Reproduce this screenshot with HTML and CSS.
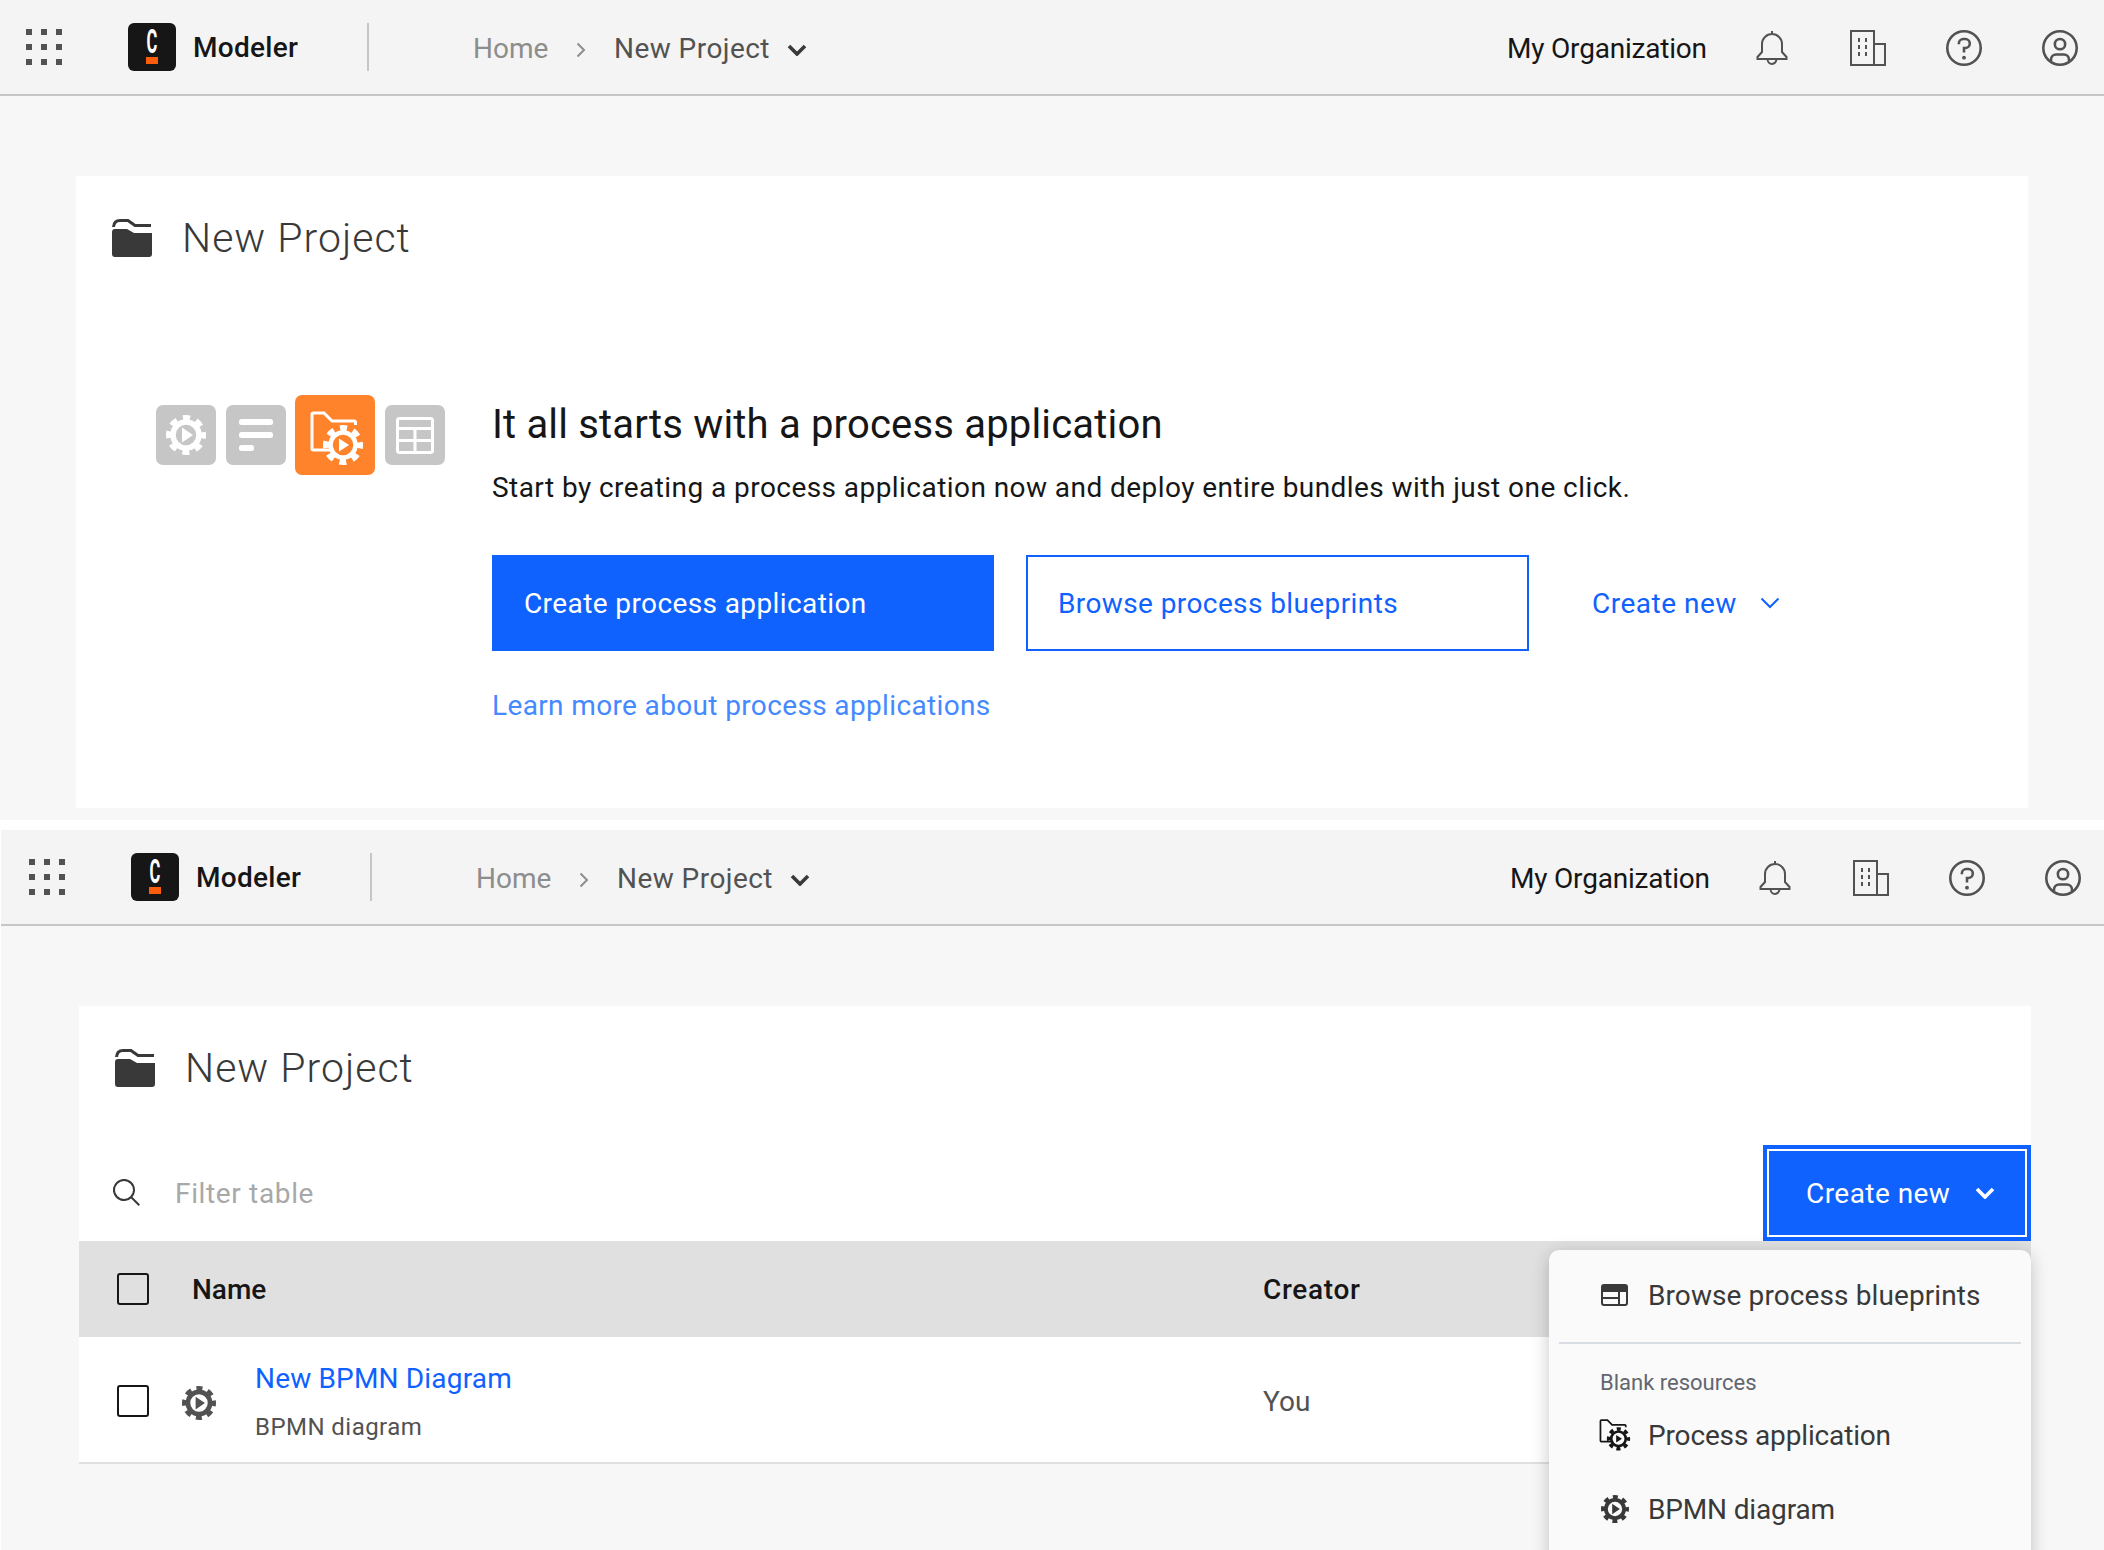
FILE: index.html
```html
<!DOCTYPE html>
<html lang="en">
<head>
  <meta charset="UTF-8" />
  <title>New Project - Modeler</title>
  <link rel="stylesheet" href="styles.css">
</head>
<body>
  <svg class="defs" width="0" height="0">
    <symbol id="i-grid" viewBox="0 0 36 36">
      <rect width="6" height="6" fill="currentColor"/><rect x="15" width="6" height="6" fill="currentColor"/><rect x="30" width="6" height="6" fill="currentColor"/>
      <rect y="15" width="6" height="6" fill="currentColor"/><rect x="15" y="15" width="6" height="6" fill="currentColor"/><rect x="30" y="15" width="6" height="6" fill="currentColor"/>
      <rect y="30" width="6" height="6" fill="currentColor"/><rect x="15" y="30" width="6" height="6" fill="currentColor"/><rect x="30" y="30" width="6" height="6" fill="currentColor"/>
    </symbol>
    <symbol id="i-bell" viewBox="0 0 32 36">
      <path d="M16 1v3M6 22V14a10 10 0 0 1 20 0v8l4.500 5v2H1.500v-2zM11.500 29a4.500 5 0 0 0 9 0" fill="none" stroke="currentColor" stroke-width="2"/>
    </symbol>
    <symbol id="i-building" viewBox="0 0 36 36">
      <path d="M1 35V1h23v34zM24 14h11v21H1" fill="none" stroke="currentColor" stroke-width="2"/>
      <path d="M9 8v4M9 15v4M9 22v4M16 8v4M16 15v4M16 22v4" fill="none" stroke="currentColor" stroke-width="2"/>
    </symbol>
    <symbol id="i-help" viewBox="2 2 28 28">
      <path fill="currentColor" d="M16,2A14,14,0,1,0,30,16,14,14,0,0,0,16,2Zm0,26A12,12,0,1,1,28,16,12,12,0,0,1,16,28Z"/>
      <circle fill="currentColor" cx="16" cy="23.500" r="1.500"/>
      <path fill="currentColor" d="M17,8H15.500A4.490,4.490,0,0,0,11,12.500V13h2v-.5A2.500,2.500,0,0,1,15.500,10H17a2.500,2.500,0,0,1,0,5H15v4.500h2V17a4.500,4.500,0,0,0,0-9Z"/>
    </symbol>
    <symbol id="i-user" viewBox="2 2 28 28">
      <path fill="currentColor" d="M16,8a5,5,0,1,0,5,5A5,5,0,0,0,16,8Zm0,8a3,3,0,1,1,3-3A3.003,3.003,0,0,1,16,16Z"/>
      <path fill="currentColor" d="M16,2A14,14,0,1,0,30,16,14.016,14.016,0,0,0,16,2ZM10,26.377V25a3.003,3.003,0,0,1,3-3h6a3.003,3.003,0,0,1,3,3v1.377a11.899,11.899,0,0,1-12,0Zm13.993-1.451A5.002,5.002,0,0,0,19,20H13a5.002,5.002,0,0,0-4.993,4.926,12,12,0,1,1,15.985,0Z"/>
    </symbol>
    <symbol id="i-search" viewBox="2 2 28 28">
      <path fill="currentColor" d="M29,27.586l-7.552-7.552a11.018,11.018,0,1,0-1.414,1.414L27.586,29ZM4,13a9,9,0,1,1,9,9A9.010,9.010,0,0,1,4,13Z"/>
    </symbol>
    <symbol id="i-folder" viewBox="0 0 40 38">
      <path d="M1.500 8Q2 1.500 8 1.500H16L23 6.500H39" fill="none" stroke="currentColor" stroke-width="3"/>
      <path d="M0 13Q0 10 3 10H15L22 14H40V35a3 3 0 0 1-3 3H3a3 3 0 0 1-3-3Z" fill="currentColor"/>
    </symbol>
    <symbol id="i-gear" viewBox="0 0 40 40">
      <circle cx="20" cy="20" r="13" fill="none" stroke="currentColor" stroke-width="5.500"/>
      <circle cx="20" cy="20" r="17" fill="none" stroke="currentColor" stroke-width="6" stroke-dasharray="7 6.350" stroke-dashoffset="3.500"/>
      <path d="M16 12.500 27 20 16 27.500z" fill="currentColor"/>
    </symbol>
    <symbol id="i-app" viewBox="0 0 54 55">
      <path d="M24 39H3.500A1.500 1.500 0 0 1 2 37.500V3.500A1.500 1.500 0 0 1 3.500 2H14l8 8H44a1.500 1.500 0 0 1 1.500 1.500V14" fill="none" stroke="currentColor" stroke-width="3"/>
      <circle cx="33" cy="34" r="12.500" fill="none" stroke="currentColor" stroke-width="4.500"/>
      <circle cx="33" cy="34" r="17" fill="none" stroke="currentColor" stroke-width="6" stroke-dasharray="7 6.350" stroke-dashoffset="3.500"/>
      <path d="M29 27.500 39 34 29 40.500z" fill="currentColor"/>
    </symbol>
    <symbol id="i-lines" viewBox="0 0 34 32">
      <rect y="0" width="34" height="6" rx="2.500" fill="currentColor"/>
      <rect y="13" width="34" height="6" rx="2.500" fill="currentColor"/>
      <rect y="26" width="15" height="6" rx="2.500" fill="currentColor"/>
    </symbol>
    <symbol id="i-table" viewBox="0 0 38 37">
      <rect x="1.500" y="1.500" width="35" height="34" rx="2" fill="none" stroke="currentColor" stroke-width="3"/>
      <path d="M1.500 11.500h35M1.500 23.500h35M19 11.500v24" fill="none" stroke="currentColor" stroke-width="3"/>
    </symbol>
    <symbol id="i-browse" viewBox="0 0 27 22">
      <rect x="1" y="1" width="25" height="20" rx="2" fill="none" stroke="currentColor" stroke-width="2"/>
      <rect x="1" y="1" width="25" height="7" fill="currentColor"/>
      <path d="M1 14h17M18 8v13" fill="none" stroke="currentColor" stroke-width="2"/>
    </symbol>
    <symbol id="i-chev" viewBox="0 0 20 12">
      <path d="M2 2 10 10 18 2" fill="none" stroke="currentColor" stroke-width="3.600"/>
    </symbol>
    <symbol id="i-chev-thin" viewBox="0 0 20 12">
      <path d="M1.500 1.500 10 10 18.500 1.500" fill="none" stroke="currentColor" stroke-width="2"/>
    </symbol>
    <symbol id="i-crumb" viewBox="0 0 10 16">
      <path d="M1.500 1.500 8 8 1.500 14.500" fill="none" stroke="currentColor" stroke-width="2"/>
    </symbol>
  </svg>

  <section class="panel">
    <header class="topbar">
      <svg class="grid-icon"><use href="#i-grid"/></svg>
      <div class="logo"><span class="logo-c">C</span><span class="logo-mark"></span></div>
      <span class="app-name">Modeler</span>
      <span class="topbar-sep"></span>
      <nav class="crumbs">
        <span class="crumb-home">Home</span>
        <svg class="crumb-sep"><use href="#i-crumb"/></svg>
        <span class="crumb-current">New Project</span>
        <svg class="crumb-chev"><use href="#i-chev"/></svg>
      </nav>
      <div class="topbar-right">
        <span class="org">My Organization</span>
        <svg class="top-icon bell"><use href="#i-bell"/></svg>
        <svg class="top-icon"><use href="#i-building"/></svg>
        <svg class="top-icon"><use href="#i-help"/></svg>
        <svg class="top-icon"><use href="#i-user"/></svg>
      </div>
    </header>

    <main class="card">
      <div class="card-title">
        <svg class="folder"><use href="#i-folder"/></svg>
        <h1>New Project</h1>
      </div>
      <div class="empty">
        <div class="tiles">
          <div class="tile"><svg class="tile-gear"><use href="#i-gear"/></svg></div>
          <div class="tile"><svg class="tile-lines"><use href="#i-lines"/></svg></div>
          <div class="tile tile-active"><svg class="tile-app"><use href="#i-app"/></svg></div>
          <div class="tile"><svg class="tile-table"><use href="#i-table"/></svg></div>
        </div>
        <div class="empty-text">
          <h2>It all starts with a process application</h2>
          <p class="desc">Start by creating a process application now and deploy entire bundles with just one click.</p>
          <div class="actions">
            <button class="btn btn-primary">Create process application</button>
            <button class="btn btn-outline">Browse process blueprints</button>
            <button class="btn-ghost">Create new <svg class="ghost-chev"><use href="#i-chev-thin"/></svg></button>
          </div>
          <a class="learn">Learn more about process applications</a>
        </div>
      </div>
    </main>
  </section>

  <section class="panel panel-second">
    <header class="topbar">
      <svg class="grid-icon"><use href="#i-grid"/></svg>
      <div class="logo"><span class="logo-c">C</span><span class="logo-mark"></span></div>
      <span class="app-name">Modeler</span>
      <span class="topbar-sep"></span>
      <nav class="crumbs">
        <span class="crumb-home">Home</span>
        <svg class="crumb-sep"><use href="#i-crumb"/></svg>
        <span class="crumb-current">New Project</span>
        <svg class="crumb-chev"><use href="#i-chev"/></svg>
      </nav>
      <div class="topbar-right">
        <span class="org">My Organization</span>
        <svg class="top-icon bell"><use href="#i-bell"/></svg>
        <svg class="top-icon"><use href="#i-building"/></svg>
        <svg class="top-icon"><use href="#i-help"/></svg>
        <svg class="top-icon"><use href="#i-user"/></svg>
      </div>
    </header>

    <main class="card card-list">
      <div class="card-title">
        <svg class="folder"><use href="#i-folder"/></svg>
        <h1>New Project</h1>
      </div>
      <div class="toolbar">
        <svg class="search-icon"><use href="#i-search"/></svg>
        <span class="filter">Filter table</span>
        <button class="btn-create">Create new <svg class="create-chev"><use href="#i-chev"/></svg></button>
      </div>
      <div class="thead">
        <span class="check"></span>
        <span class="th">Name</span>
        <span class="th th-creator">Creator</span>
      </div>
      <div class="trow">
        <span class="check"></span>
        <svg class="row-gear"><use href="#i-gear"/></svg>
        <div class="row-name">
          <a class="row-link">New BPMN Diagram</a>
          <span class="row-type">BPMN diagram</span>
        </div>
        <span class="row-creator">You</span>
      </div>

      <div class="menu">
        <div class="menu-item menu-first">
          <svg class="menu-icon browse"><use href="#i-browse"/></svg>
          <span>Browse process blueprints</span>
        </div>
        <div class="menu-sep"></div>
        <div class="menu-label">Blank resources</div>
        <div class="menu-item">
          <svg class="menu-icon app"><use href="#i-app"/></svg>
          <span>Process application</span>
        </div>
        <div class="menu-item">
          <svg class="menu-icon gear"><use href="#i-gear"/></svg>
          <span>BPMN diagram</span>
        </div>
      </div>
    </main>
  </section>
</body>
</html>
```

FILE: styles.css
```css
html, body {
  margin: 0;
  height: 1550px;
  overflow: hidden;
  background: #fff;
}
body {
  font-family: "Roboto", "Liberation Sans", sans-serif;
  font-size: 28px;
  color: #161616;
}
.defs { position: absolute; }
h1, h2, p { margin: 0; font-weight: 400; }
button { font: inherit; cursor: pointer; }

.panel {
  height: 820px;
  background: #f7f7f7;
}
.panel-second {
  height: 720px;
  margin: 10px 0 0 1px;
  overflow: hidden;
}

/* Top bar */
.topbar {
  display: flex;
  align-items: center;
  height: 94px;
  padding: 0 26px 0 26px;
  background: #f4f4f4;
  border-bottom: 2px solid #c6c6c6;
}
.panel-second .topbar { padding: 0 23px 0 28px; }
.grid-icon { width: 36px; height: 36px; color: #525252; margin-right: 66px; }
.logo {
  display: flex;
  flex-direction: column;
  align-items: center;
  width: 48px;
  height: 48px;
  margin-right: 17px;
  border-radius: 6px;
  background: #161616;
  overflow: hidden;
}
.logo-c {
  height: 29px;
  margin-top: 3px;
  font-size: 33px;
  font-weight: 700;
  line-height: 32px;
  color: #fff;
  transform: scaleX(.5);
}
.logo-mark { width: 11.5px; height: 7px; margin-top: 2px; background: #fc5d0d; }
.app-name { width: 174px; font-weight: 500; letter-spacing: 0.3px; }
.topbar-sep { width: 2px; height: 48px; background: #c6c6c6; margin-right: 104px; }
.crumbs { display: flex; align-items: center; margin-top: 2px; color: #525252; }
.crumb-home { color: #8d8d8d; width: 103px; }
.crumb-sep { width: 10px; height: 16px; color: #8d8d8d; margin: 4px 28px 0 0; }
.crumb-current { width: 173px; letter-spacing: 0.45px; }
.crumb-chev { width: 20px; height: 12px; color: #393939; margin-top: 4px; }
.topbar-right { display: flex; align-items: center; margin-left: auto; margin-top: 2px; }
.org { width: 247px; letter-spacing: -0.2px; }
.top-icon { width: 36px; height: 36px; color: #525252; margin-left: 60px; }
.top-icon:nth-child(2) { margin-left: 0; }

/* Card */
.card {
  position: relative;
  width: 1952px;
  height: 632px;
  margin: 80px 0 0 76px;
  background: #fff;
}
.card-title {
  display: flex;
  align-items: center;
  height: 124px;
  padding-left: 36px;
}
.folder { width: 40px; height: 38px; color: #393939; margin-right: 30px; }
.card-title h1 { font-size: 41px; font-weight: 300; letter-spacing: 1px; color: #393939; }

/* Empty state */
.empty {
  display: flex;
  align-items: flex-start;
  padding: 95px 0 0 80px;
}
.tiles { display: flex; align-items: center; gap: 9.5px; margin-right: 47.5px; }
.tile {
  display: flex;
  align-items: center;
  justify-content: center;
  width: 60px;
  height: 60px;
  border-radius: 7px;
  background: #c6c6c6;
  color: #fff;
}
.tile-active { width: 80px; height: 80px; background: #ff832b; }
.tile-gear { width: 40px; height: 40px; }
.tile-lines { width: 34px; height: 32px; }
.tile-table { width: 38px; height: 37px; }
.tile-app { width: 54px; height: 55px; margin: 6px 0 0 4px; }
.empty-text { padding-top: 6px; }
.empty-text h2 { font-size: 40px; line-height: 48px; letter-spacing: 0.18px; }
.desc { margin-top: 19px; line-height: 40px; letter-spacing: 0.44px; }
.actions { display: flex; align-items: center; margin-top: 47px; }
.btn {
  width: 502px;
  height: 96px;
  padding: 0 30px;
  text-align: left;
  box-sizing: border-box;
  border: 2px solid #0f62fe;
  letter-spacing: 0.4px;
}
.btn-primary { background: #0f62fe; color: #fff; margin-right: 32px; }
.btn-outline { width: 503px; background: #fff; color: #0f62fe; }
.btn-ghost {
  display: flex;
  align-items: center;
  margin-left: 63px;
  padding: 0;
  border: 0;
  background: none;
  color: #0f62fe;
  letter-spacing: 0.5px;
}
.ghost-chev { width: 20px; height: 12px; margin-left: 23px; }
.learn { display: block; margin-top: 35px; line-height: 40px; letter-spacing: 0.36px; color: #4589ff; }

/* List state */
.card-list { height: 458px; margin-left: 78px; }
.toolbar {
  display: flex;
  align-items: center;
  height: 96px;
  margin-top: 15px;
}
.search-icon { width: 28px; height: 28px; color: #393939; margin: 0 34px; }
.filter { color: #a8a8a8; letter-spacing: 0.65px; }
.btn-create {
  display: flex;
  align-items: center;
  width: 268px;
  height: 96px;
  margin-left: auto;
  padding: 0 0 0 39px;
  box-sizing: border-box;
  border: 4px solid #0f62fe;
  background: #0f62fe;
  box-shadow: inset 0 0 0 2px #fff;
  color: #fff;
  letter-spacing: 0.45px;
}
.create-chev { width: 20px; height: 12px; margin-left: 25px; }
.thead {
  display: grid;
  grid-template-columns: 75px 1071px 1fr;
  align-items: center;
  height: 96px;
  padding-left: 38px;
  background: #e0e0e0;
}
.th { font-weight: 500; }
.th-creator { letter-spacing: 0.7px; }
.check {
  width: 32px;
  height: 32px;
  box-sizing: border-box;
  border: 2px solid #161616;
  border-radius: 3px;
}
.trow {
  display: grid;
  grid-template-columns: 65px 74px 1007px 1fr;
  align-items: center;
  height: 123px;
  margin-top: 2px;
  padding-left: 38px;
  border-bottom: 2px solid #e0e0e0;
}
.row-gear { width: 34px; height: 34px; color: #525252; margin-top: 4px; }
.row-name { display: flex; flex-direction: column; padding-top: 1px; margin-left: -1px; }
.row-link { color: #0f62fe; line-height: 40px; letter-spacing: 0.17px; }
.row-type { font-size: 24px; line-height: 32px; margin-top: 12px; letter-spacing: 0.45px; color: #525252; }
.row-creator { margin-top: 2px; color: #525252; }

/* Dropdown */
.menu {
  position: absolute;
  top: 244px;
  right: 0;
  width: 482px;
  height: 320px;
  box-sizing: border-box;
  padding: 0 10px;
  border-radius: 10px 10px 0 0;
  background: #fafafa;
  box-shadow: 0 4px 18px rgba(0, 0, 0, 0.22);
  color: #393939;
}
.menu-item {
  display: flex;
  align-items: center;
  box-sizing: border-box;
  height: 74px;
  padding-left: 42px;
  letter-spacing: -0.15px;
}
.menu-first { height: 92px; padding-bottom: 2px; letter-spacing: 0.1px; }
.menu-icon { flex: none; margin-right: 20px; }
.menu-icon.browse { width: 27px; height: 22px; }
.menu-icon.app { width: 32px; height: 32px; margin: 0 17px 0 -2px; color: #161616; }
.menu-icon.gear { width: 28px; height: 28px; margin-right: 19px; }
.menu-sep { height: 2px; background: #d8dce3; }
.menu-label { padding: 25px 0 1px 41px; font-size: 22px; line-height: 28px; color: #62666f; }
```
